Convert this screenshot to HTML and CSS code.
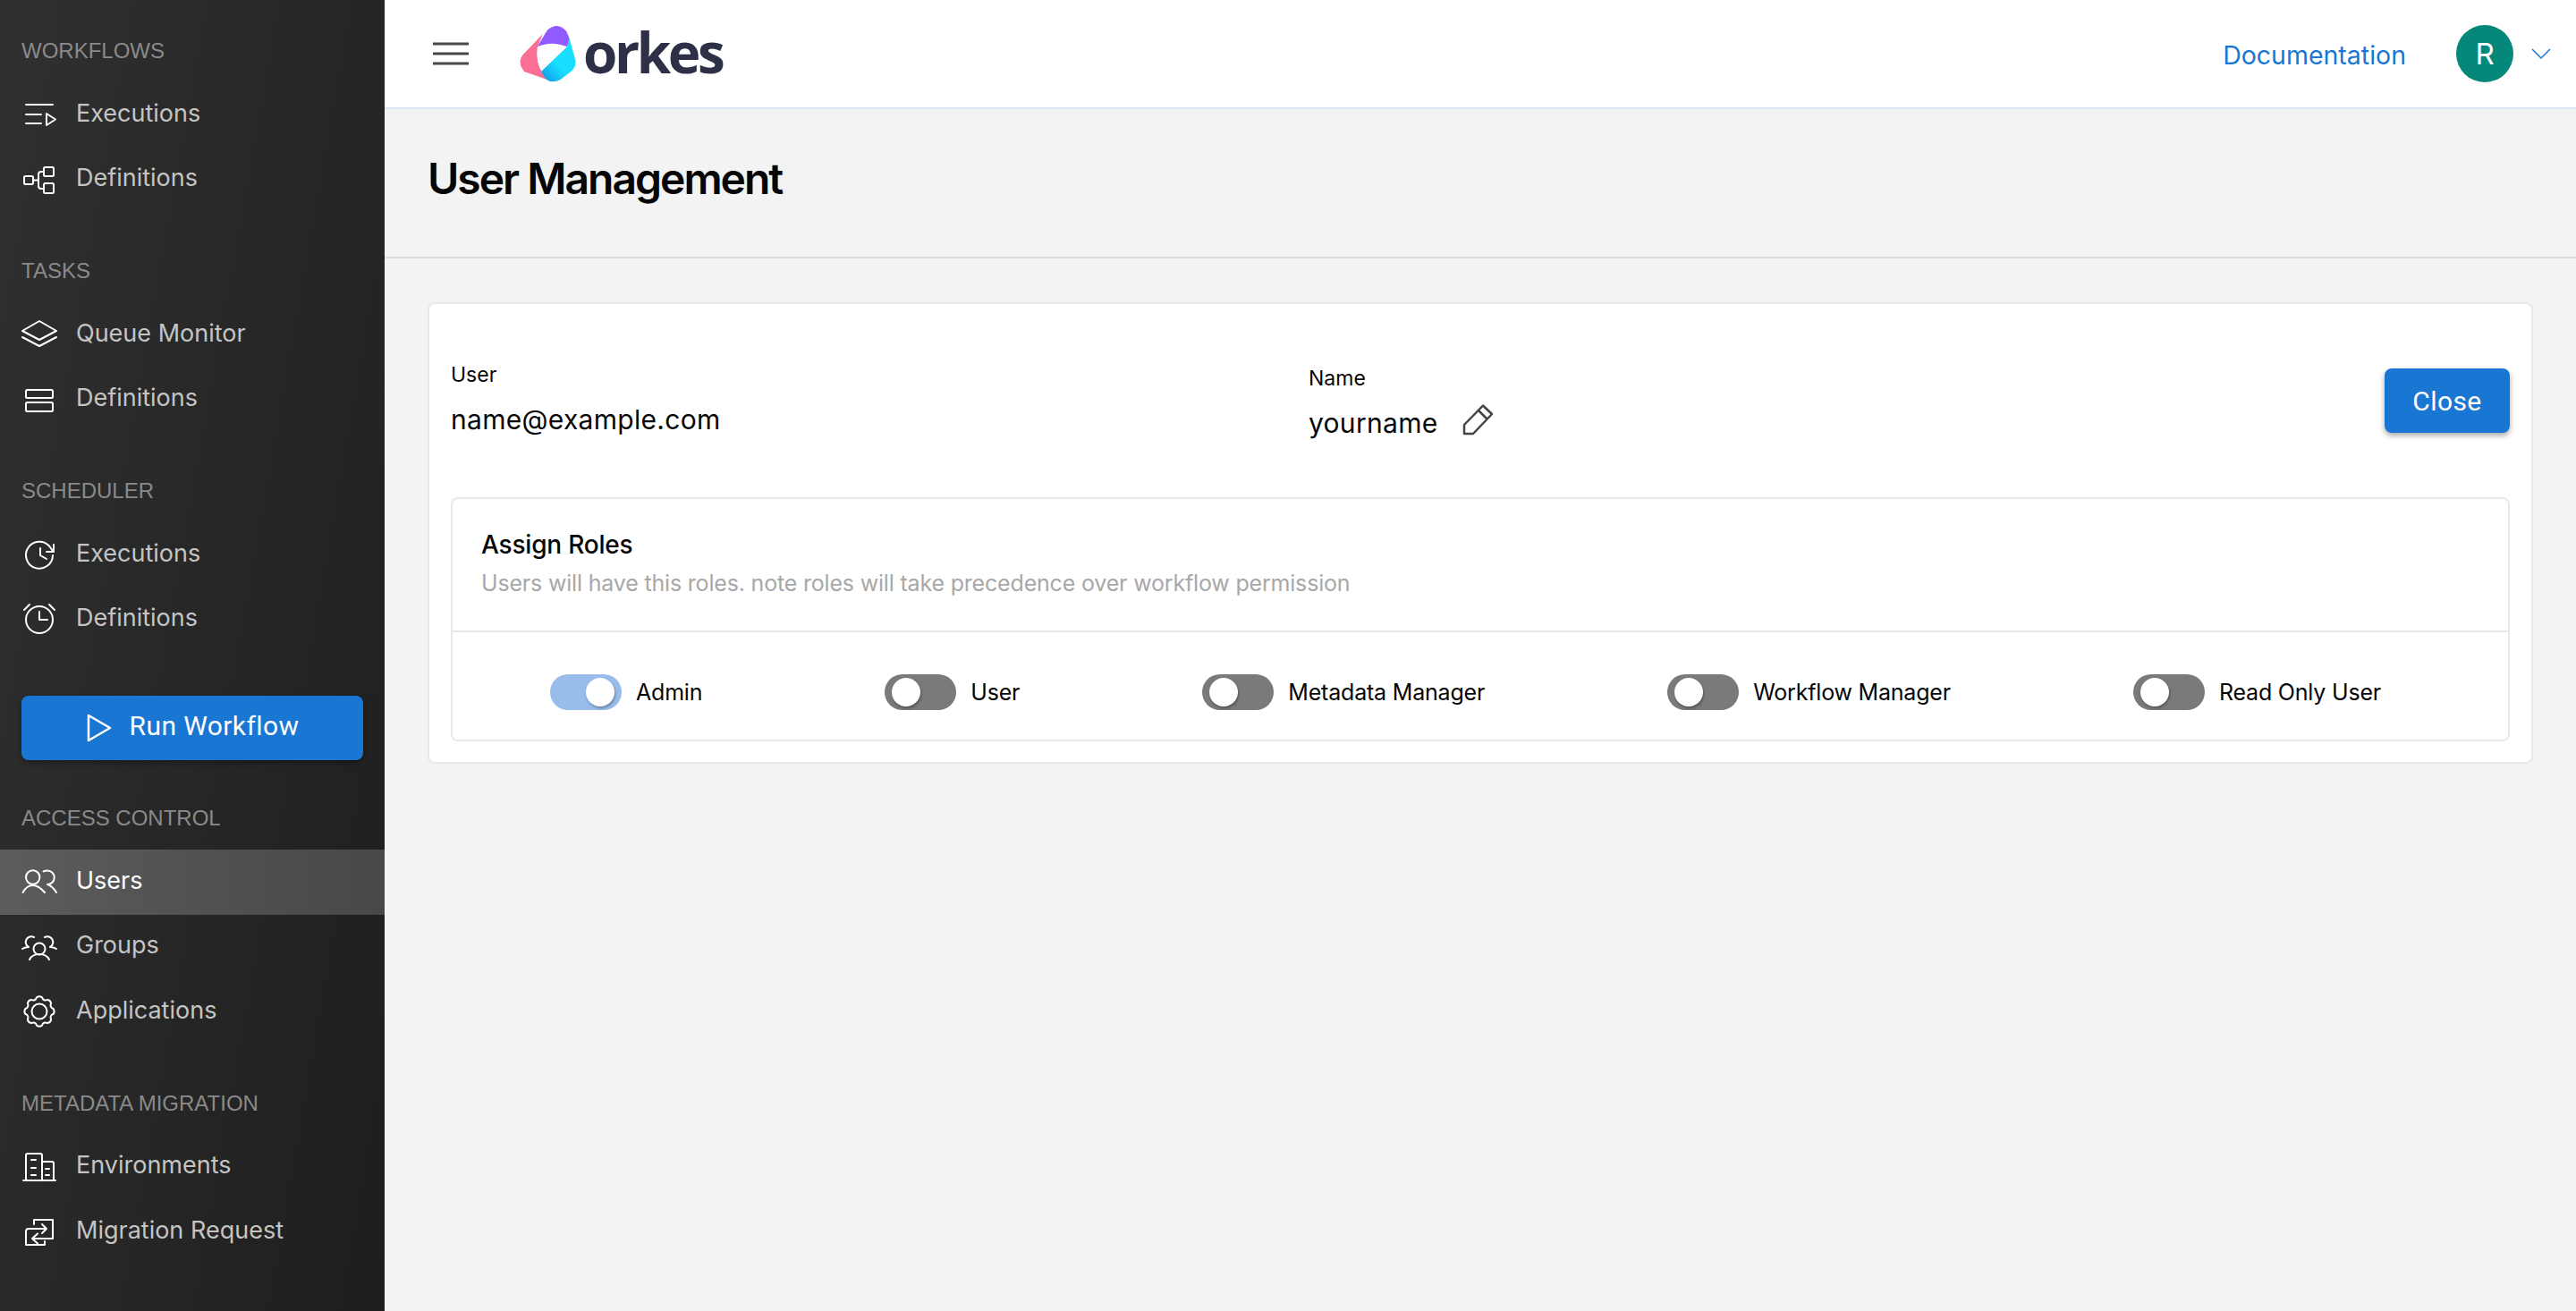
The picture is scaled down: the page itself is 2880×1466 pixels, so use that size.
FILE: index.html
```html
<!DOCTYPE html>
<html lang="en">
<head>
  <meta charset="UTF-8">
  <title>User Management</title>
  <link rel="stylesheet" href="styles.css">
</head>
<body>
  <aside class="sidebar">
    <div class="nav-label">WORKFLOWS</div>
    <a class="nav-item">
      <svg class="nav-icon" viewBox="0 0 44 44"><path d="M7 13H37M7 24H24M7 34H24M30 23L40 29.500L30 36Z"/></svg>
      <span>Executions</span>
    </a>
    <a class="nav-item">
      <svg class="nav-icon" viewBox="0 0 44 44"><rect x="5" y="20" width="10" height="9" rx="1.5"/><rect x="27" y="10" width="11" height="10" rx="1.5"/><rect x="27" y="28" width="11" height="11" rx="1.5"/><path d="M15 24.500H21M27 15H24Q21 15 21 18V31Q21 34 24 34H27"/></svg>
      <span>Definitions</span>
    </a>

    <div class="nav-label">TASKS</div>
    <a class="nav-item">
      <svg class="nav-icon" viewBox="0 0 44 44"><path d="M22 9L41 20L22 30L3 20ZM3 27L22 37L41 27"/></svg>
      <span>Queue Monitor</span>
    </a>
    <a class="nav-item">
      <svg class="nav-icon" viewBox="0 0 44 44"><rect x="7" y="13" width="30" height="9" rx="1.5"/><rect x="7" y="27" width="30" height="10" rx="1.5"/></svg>
      <span>Definitions</span>
    </a>

    <div class="nav-label">SCHEDULER</div>
    <a class="nav-item">
      <svg class="nav-icon" viewBox="0 0 44 44"><path d="M37 25A15 15 0 1 1 33 14.500L37 20M38 13V21H30M23 17V25L30 29"/></svg>
      <span>Executions</span>
    </a>
    <a class="nav-item">
      <svg class="nav-icon" viewBox="0 0 44 44"><circle cx="22" cy="24" r="15"/><path d="M22 15V24H31M5 13L11 7M33 7L39 13"/></svg>
      <span>Definitions</span>
    </a>

    <button class="run-btn">
      <svg class="run-icon" viewBox="0 0 30 34"><path d="M3 3L27 17L3 31Z"/></svg>
      Run Workflow
    </button>

    <div class="nav-label">ACCESS CONTROL</div>
    <a class="nav-item active">
      <svg class="nav-icon" viewBox="0 0 44 44"><circle cx="14.700" cy="19" r="7.700"/><path d="M3.500 36Q8 28 14.700 28Q21 28 28 36M26.500 12.500Q29 11.500 31 11.500A7.500 7.500 0 0 1 31 27Q37 29 41 36"/></svg>
      <span>Users</span>
    </a>
    <a class="nav-item">
      <svg class="nav-icon" viewBox="0 0 44 44"><circle cx="22" cy="26" r="6.500"/><path d="M11 38Q14 32 22 32Q30 32 33 38M16 13A5.500 5.500 0 1 0 10 24Q6 24 3 26M28 13A5.500 5.500 0 1 1 34 24Q38 24 41 26"/></svg>
      <span>Groups</span>
    </a>
    <a class="nav-item">
      <svg class="nav-icon" viewBox="0 0 44 44"><g transform="translate(0 2)"><circle cx="22" cy="22" r="8.500"/><path d="M19.200 6.200Q22 4.500 24.800 6.200Q26.600 10.900 31.200 8.900Q34.400 9.600 35.100 12.800Q33.100 17.400 37.800 19.200Q39.500 22 37.800 24.800Q33.100 26.600 35.100 31.200Q34.400 34.400 31.200 35.100Q26.600 33.100 24.800 37.800Q22 39.500 19.200 37.800Q17.400 33.100 12.800 35.100Q9.600 34.400 8.900 31.200Q10.900 26.600 6.200 24.800Q4.500 22 6.200 19.200Q10.900 17.400 8.900 12.800Q9.600 9.600 12.800 8.900Q17.400 10.900 19.200 6.200Z"/></g></svg>
      <span>Applications</span>
    </a>

    <div class="nav-label">METADATA MIGRATION</div>
    <a class="nav-item">
      <svg class="nav-icon" viewBox="0 0 44 44"><path d="M4 39H40M7 39V11Q7 9 9 9H23Q25 9 25 11V39M25 18H36Q38 18 38 20V39M13 16H18M13 25H18M13 33H18M29 26H33M29 33H33"/></svg>
      <span>Environments</span>
    </a>
    <a class="nav-item">
      <svg class="nav-icon" viewBox="0 0 44 44"><path d="M16 16V11H37V32H14M20 26.500L14 32L20 37.500M7 39V24Q7 21 10 21H30M25 16L30 21L25 26M7 39H28V35"/></svg>
      <span>Migration Request</span>
    </a>
  </aside>

  <div class="main">
    <header class="topbar">
      <svg class="menu-icon" viewBox="0 0 40 26"><path d="M0 2H40M0 13H40M0 24H40"/></svg>
      <svg class="logo-mark" viewBox="0 0 330 240">
        <defs>
          <linearGradient id="cyan" x1="0.7" y1="0.35" x2="0.15" y2="1">
            <stop offset="0.4" stop-color="#19dfff"/>
            <stop offset="1" stop-color="#129be6"/>
          </linearGradient>
        </defs>
        <path fill="#fa6f93" d="M110 55L45 122Q22 150 50 181L125 207L112 190Q85 150 92 100Z"/>
        <path fill="#8f5bff" d="M92 97L125 42Q160 10 190 45L200 70L192 97Q140 75 92 97Z"/>
        <path fill="url(#cyan)" d="M192 97L200 70L218 135Q228 160 205 180L170 207Q140 222 120 205L105 180Z"/>
      </svg>
      <span class="logo-text">orkes</span>
      <div class="topbar-right">
        <a class="doc-link">Documentation</a>
        <span class="avatar">R</span>
        <svg class="caret" viewBox="0 0 22 14"><path d="M1 2L11 12L21 2"/></svg>
      </div>
    </header>

    <div class="title-bar">
      <h1>User Management</h1>
    </div>

    <div class="content">
      <section class="card">
        <div class="user-row">
          <div class="field field-user">
            <div class="field-label">User</div>
            <div class="field-value">name@example.com</div>
          </div>
          <div class="field field-name">
            <div class="field-label">Name</div>
            <div class="field-value">yourname
              <svg class="edit-icon" viewBox="0 0 36 36"><path d="M3 24L24 2.500L34 12L13 34H3ZM19 8L29 18"/></svg>
            </div>
          </div>
          <button class="close-btn">Close</button>
        </div>

        <div class="roles">
          <div class="roles-head">
            <div class="roles-title">Assign Roles</div>
            <div class="roles-sub">Users will have this roles. note roles will take precedence over workflow permission</div>
          </div>
          <div class="roles-list">
            <label class="role"><span class="switch on"><span class="thumb"></span></span>Admin</label>
            <label class="role"><span class="switch"><span class="thumb"></span></span>User</label>
            <label class="role"><span class="switch"><span class="thumb"></span></span>Metadata Manager</label>
            <label class="role"><span class="switch"><span class="thumb"></span></span>Workflow Manager</label>
            <label class="role"><span class="switch"><span class="thumb"></span></span>Read Only User</label>
          </div>
        </div>
      </section>
    </div>
  </div>
</body>
</html>
```

FILE: styles.css
```css
* { box-sizing: border-box; }
html, body { height: 100%; }
body { margin: 0; display: flex; font-family: Inter, "Liberation Sans", sans-serif; background: #f3f3f3; color: #060606; overflow: hidden; }

.sidebar { display: flex; flex-direction: column; width: 430px; flex: none; height: 1466px; padding-top: 40px; background: linear-gradient(100deg, #303030, #1e1e1e); }
.nav-label { flex: none; height: 34px; line-height: 34px; margin: 0 0 16px; padding-left: 24px; font-family: "Liberation Sans", sans-serif; font-size: 24px; color: #8a8a8a; }
.nav-item + .nav-label { margin-top: 51px; }
.nav-item { display: flex; flex: none; align-items: center; height: 72.5px; padding-left: 22px; gap: 19px; font-size: 27px; color: #c4c4c4; }
.nav-item.active { margin: 2px 0 -2px; padding-bottom: 4px; background: linear-gradient(90deg, #5c5c5c, #484848); color: #fff; }
.nav-icon { width: 44px; height: 44px; flex: none; fill: none; stroke: #fff; stroke-width: 2; stroke-linejoin: round; stroke-linecap: round; }

.run-btn { display: flex; flex: none; align-items: center; justify-content: center; gap: 19px; width: 382px; height: 72px; margin: 51px 0 48px 24px; padding: 0 0 6px; border: 0; border-radius: 8px; background: #1976d2; color: #fff; font: 400 30px Roboto, sans-serif; letter-spacing: .4px; box-shadow: 0 3px 6px rgba(0, 0, 0, .35); }
.run-icon { width: 30px; height: 34px; margin-top: 6px; fill: none; stroke: #fff; stroke-width: 2.5; stroke-linejoin: round; }

.main { flex: 1; min-width: 0; }
.topbar { display: flex; align-items: center; height: 122px; padding-left: 54px; background: #fff; border-bottom: 2px solid #dde5f8; }
.menu-icon { width: 40px; height: 26px; fill: none; stroke: #484848; stroke-width: 3; stroke-linecap: round; }
.logo-mark { width: 110px; height: 80px; margin-left: 46px; }
.logo-text { margin: -4px 0 0 -28px; font-family: "Open Sans", sans-serif; font-weight: 700; font-size: 62px; letter-spacing: -3.4px; color: #2d3047; }
.topbar-right { display: flex; align-items: center; margin-left: auto; padding-right: 28px; }
.doc-link { margin-top: 2px; font-size: 28.5px; color: #1976d2; }
.avatar { display: flex; align-items: center; justify-content: center; width: 64px; height: 64px; margin-left: 56px; border-radius: 50%; background: #05887a; color: #fff; font-size: 33px; }
.caret { width: 22px; height: 14px; margin-left: 20px; fill: none; stroke: #1976d2; stroke-width: 1.5; }

.title-bar { height: 167px; padding: 48px 0 0 48px; border-bottom: 2px solid #dcdcdc; }
h1 { margin: 0; font-size: 48px; font-weight: 600; line-height: 60px; letter-spacing: -2px; }

.content { padding: 49px 48px 0; }
.card { height: 516px; padding: 0 24px; background: #fff; border: 2px solid #e8e8e8; border-radius: 8px; }
.user-row { display: flex; align-items: center; height: 216px; }
.field-user { width: 959px; margin-top: -2px; }
.field-name { margin-top: 6px; }
.field-label { font-size: 23px; margin-bottom: 16px; }
.field-value { display: flex; align-items: center; font-size: 30px; letter-spacing: .3px; line-height: 40px; }
.edit-icon { width: 36px; height: 36px; margin-left: 26px; margin-top: -9px; fill: none; stroke: #444; stroke-width: 2.5; stroke-linejoin: round; }
.close-btn { margin-left: auto; width: 140px; height: 72px; border: 0; border-radius: 8px; background: #1976d2; color: #fff; font: 400 30px Roboto, sans-serif; letter-spacing: .4px; box-shadow: 0 3px 6px rgba(0, 0, 0, .35); }

.roles { height: 273px; border: 2px solid #e8e8e8; border-radius: 8px; }
.roles-head { height: 149px; padding: 32px 32px 0; border-bottom: 2px solid #e8e8e8; }
.roles-title { font-size: 28px; font-weight: 500; line-height: 38px; letter-spacing: -.2px; }
.roles-sub { margin-top: 6px; font-size: 25px; letter-spacing: -.18px; line-height: 36px; color: #a8a8a8; }
.roles-list { display: flex; justify-content: space-between; align-items: center; height: 120px; padding: 14px 142px 0 109px; }
.role { display: flex; align-items: center; gap: 16px; font-size: 25px; letter-spacing: -.2px; }
.switch { display: flex; align-items: center; width: 80px; height: 40px; padding: 0 8px; border-radius: 20px; background: #7a7a7a; }
.switch.on { background: #98bdeb; justify-content: flex-end; }
.thumb { width: 32px; height: 32px; border-radius: 50%; background: #fff; box-shadow: 1px 2px 3px rgba(0, 0, 0, .3); }
```
